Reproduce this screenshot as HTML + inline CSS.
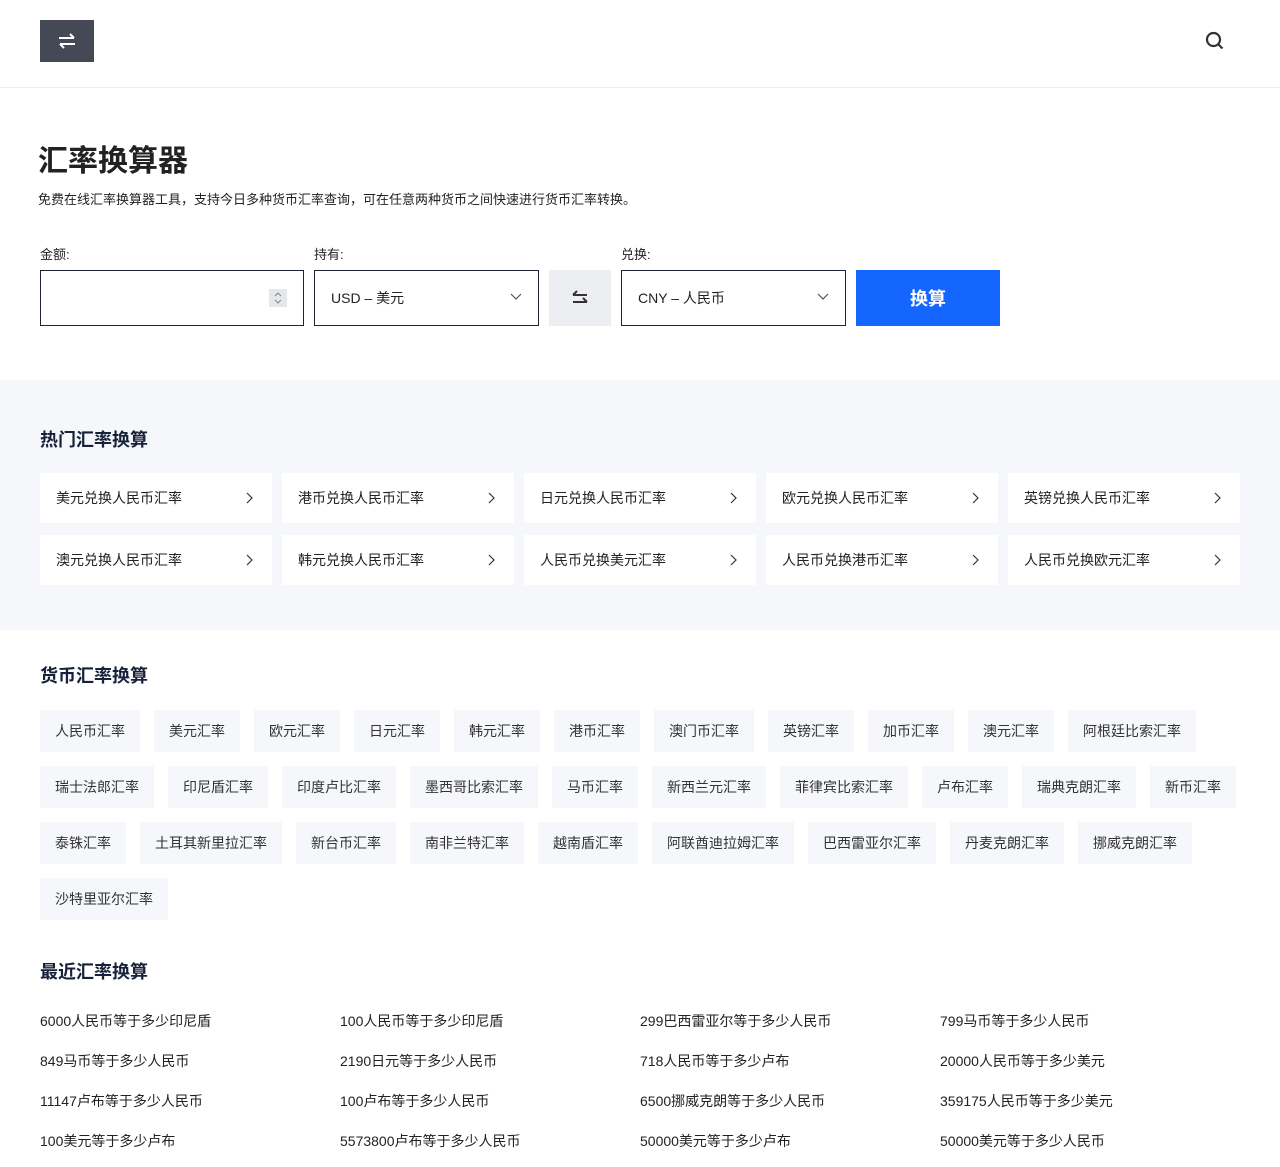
<!DOCTYPE html>
<html><head><meta charset="utf-8"><style>
*{box-sizing:border-box;margin:0;padding:0}
body{width:1280px;height:1167px;overflow:hidden;background:#fff;font-family:"Liberation Sans","Noto Sans CJK SC",sans-serif;color:#1f2937}
.hdr{height:88px;border-bottom:1px solid #ececec;position:relative}
.logo{position:absolute;left:40px;top:20px;width:54px;height:42px;background:#444955;display:flex;align-items:center;justify-content:center}
.srch{position:absolute;left:1205px;top:31px}
h1{position:absolute;left:38px;top:136px;font-size:30px;font-weight:bold;color:#222}
.desc{position:absolute;left:38px;top:189px;font-size:13px;color:#222}
.lbl{position:absolute;top:244px;font-size:13px;color:#222}
.box{position:absolute;top:270px;height:56px;border:1px solid #1b2533;background:#fff;font-size:14px;display:flex;align-items:center;padding-left:16px;color:#222}
.chev{position:absolute;right:16px;top:22px}
.swap{position:absolute;left:549px;top:270px;width:62px;height:56px;background:#eceef1;display:flex;align-items:center;justify-content:center}
.btn{position:absolute;left:856px;top:270px;width:144px;height:56px;background:#1565ff;color:#fff;font-size:18px;font-weight:bold;display:flex;align-items:center;justify-content:center}
.gray{position:absolute;left:0;top:380px;width:1280px;height:250px;background:#f5f7fa}
.sec{position:absolute;left:40px;font-size:18px;font-weight:bold;color:#17223a}
.card{position:absolute;width:232px;height:50px;background:#fff;font-size:14px;color:#222;display:flex;align-items:center;padding-left:16px}
.card svg{position:absolute;right:19px;top:19px}
.tags{position:absolute;left:40px;top:710px;width:1200px;display:flex;flex-wrap:wrap;gap:14px}
.tag{height:42px;padding:0 15px;background:#f5f7fa;font-size:14px;color:#333;display:flex;align-items:center;white-space:nowrap}
.rec{position:absolute;font-size:14px;color:#222}
</style></head><body>
<div class="hdr">
<div class="logo"><svg width="18" height="16" viewBox="0 0 18 16" fill="none" stroke="#fff" stroke-width="2"><path d="M1 5h15M12 1l4 4"/><path d="M17 11H2M6 15l-4-4"/></svg></div>
<svg class="srch" width="20" height="20" viewBox="0 0 20 20" fill="none" stroke="#333" stroke-width="2.2"><circle cx="8.5" cy="8.5" r="6.5"/><path d="M13.5 13.5l4 4"/></svg>
</div>
<h1>汇率换算器</h1>
<div class="desc">免费在线汇率换算器工具，支持今日多种货币汇率查询，可在任意两种货币之间快速进行货币汇率转换。</div>
<div class="lbl" style="left:40px">金额:</div>
<div class="lbl" style="left:314px">持有:</div>
<div class="lbl" style="left:621px">兑换:</div>
<div class="box" style="left:40px;width:264px"><div style="position:absolute;left:228px;top:18px;width:18px;height:18px;background:#e6e7ea"><svg width="18" height="18" viewBox="0 0 18 18" fill="none" stroke="#888" stroke-width="1"><path d="M6 7l3-3 3 3M6 11l3 3 3-3"/></svg></div></div>
<div class="box" style="left:314px;width:225px">USD – 美元<svg class="chev" width="12" height="8" viewBox="0 0 12 8" fill="none" stroke="#555" stroke-width="1.2"><path d="M1 1l5 5 5-5"/></svg></div>
<div class="swap"><svg width="18" height="18" viewBox="0 0 18 18" fill="none" stroke="#333" stroke-width="2"><path d="M16 6H2M6 2L2 6"/><path d="M2 13h14M12 9l4 4"/></svg></div>
<div class="box" style="left:621px;width:225px">CNY – 人民币<svg class="chev" width="12" height="8" viewBox="0 0 12 8" fill="none" stroke="#555" stroke-width="1.2"><path d="M1 1l5 5 5-5"/></svg></div>
<div class="btn">换算</div>
<div class="gray">
<div class="sec" style="top:46px">热门汇率换算</div>
<div class="card" style="left:40px;top:93px">美元兑换人民币汇率<svg width="7" height="12" viewBox="0 0 7 12" fill="none" stroke="#333" stroke-width="1.2"><path d="M1 1l5 5-5 5"/></svg></div>
<div class="card" style="left:282px;top:93px">港币兑换人民币汇率<svg width="7" height="12" viewBox="0 0 7 12" fill="none" stroke="#333" stroke-width="1.2"><path d="M1 1l5 5-5 5"/></svg></div>
<div class="card" style="left:524px;top:93px">日元兑换人民币汇率<svg width="7" height="12" viewBox="0 0 7 12" fill="none" stroke="#333" stroke-width="1.2"><path d="M1 1l5 5-5 5"/></svg></div>
<div class="card" style="left:766px;top:93px">欧元兑换人民币汇率<svg width="7" height="12" viewBox="0 0 7 12" fill="none" stroke="#333" stroke-width="1.2"><path d="M1 1l5 5-5 5"/></svg></div>
<div class="card" style="left:1008px;top:93px">英镑兑换人民币汇率<svg width="7" height="12" viewBox="0 0 7 12" fill="none" stroke="#333" stroke-width="1.2"><path d="M1 1l5 5-5 5"/></svg></div>
<div class="card" style="left:40px;top:155px">澳元兑换人民币汇率<svg width="7" height="12" viewBox="0 0 7 12" fill="none" stroke="#333" stroke-width="1.2"><path d="M1 1l5 5-5 5"/></svg></div>
<div class="card" style="left:282px;top:155px">韩元兑换人民币汇率<svg width="7" height="12" viewBox="0 0 7 12" fill="none" stroke="#333" stroke-width="1.2"><path d="M1 1l5 5-5 5"/></svg></div>
<div class="card" style="left:524px;top:155px">人民币兑换美元汇率<svg width="7" height="12" viewBox="0 0 7 12" fill="none" stroke="#333" stroke-width="1.2"><path d="M1 1l5 5-5 5"/></svg></div>
<div class="card" style="left:766px;top:155px">人民币兑换港币汇率<svg width="7" height="12" viewBox="0 0 7 12" fill="none" stroke="#333" stroke-width="1.2"><path d="M1 1l5 5-5 5"/></svg></div>
<div class="card" style="left:1008px;top:155px">人民币兑换欧元汇率<svg width="7" height="12" viewBox="0 0 7 12" fill="none" stroke="#333" stroke-width="1.2"><path d="M1 1l5 5-5 5"/></svg></div>
</div>
<div class="sec" style="top:662px">货币汇率换算</div>
<div class="tags">
<div class="tag">人民币汇率</div><div class="tag">美元汇率</div><div class="tag">欧元汇率</div><div class="tag">日元汇率</div><div class="tag">韩元汇率</div><div class="tag">港币汇率</div><div class="tag">澳门币汇率</div><div class="tag">英镑汇率</div><div class="tag">加币汇率</div><div class="tag">澳元汇率</div><div class="tag">阿根廷比索汇率</div>
<div class="tag">瑞士法郎汇率</div><div class="tag">印尼盾汇率</div><div class="tag">印度卢比汇率</div><div class="tag">墨西哥比索汇率</div><div class="tag">马币汇率</div><div class="tag">新西兰元汇率</div><div class="tag">菲律宾比索汇率</div><div class="tag">卢布汇率</div><div class="tag">瑞典克朗汇率</div><div class="tag">新币汇率</div>
<div class="tag">泰铢汇率</div><div class="tag">土耳其新里拉汇率</div><div class="tag">新台币汇率</div><div class="tag">南非兰特汇率</div><div class="tag">越南盾汇率</div><div class="tag">阿联酋迪拉姆汇率</div><div class="tag">巴西雷亚尔汇率</div><div class="tag">丹麦克朗汇率</div><div class="tag">挪威克朗汇率</div>
<div class="tag">沙特里亚尔汇率</div>
</div>
<div class="sec" style="top:958px">最近汇率换算</div>
<div class="rec" style="left:40px;top:1011px">6000人民币等于多少印尼盾</div>
<div class="rec" style="left:340px;top:1011px">100人民币等于多少印尼盾</div>
<div class="rec" style="left:640px;top:1011px">299巴西雷亚尔等于多少人民币</div>
<div class="rec" style="left:940px;top:1011px">799马币等于多少人民币</div>
<div class="rec" style="left:40px;top:1051px">849马币等于多少人民币</div>
<div class="rec" style="left:340px;top:1051px">2190日元等于多少人民币</div>
<div class="rec" style="left:640px;top:1051px">718人民币等于多少卢布</div>
<div class="rec" style="left:940px;top:1051px">20000人民币等于多少美元</div>
<div class="rec" style="left:40px;top:1091px">11147卢布等于多少人民币</div>
<div class="rec" style="left:340px;top:1091px">100卢布等于多少人民币</div>
<div class="rec" style="left:640px;top:1091px">6500挪威克朗等于多少人民币</div>
<div class="rec" style="left:940px;top:1091px">359175人民币等于多少美元</div>
<div class="rec" style="left:40px;top:1131px">100美元等于多少卢布</div>
<div class="rec" style="left:340px;top:1131px">5573800卢布等于多少人民币</div>
<div class="rec" style="left:640px;top:1131px">50000美元等于多少卢布</div>
<div class="rec" style="left:940px;top:1131px">50000美元等于多少人民币</div>
</body></html>
